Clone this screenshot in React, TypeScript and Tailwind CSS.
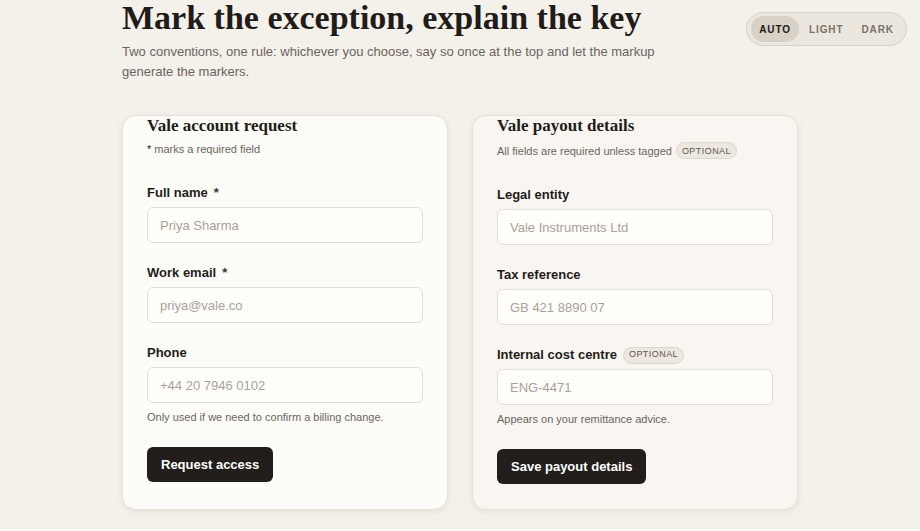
const serif = "font-['Liberation_Serif','DejaVu_Serif',serif]";
const sans = "font-['Liberation_Sans','Noto_Sans',sans-serif]";

function Optional() {
  return (
    <span className="inline-flex h-[17px] items-center rounded-full border border-[#ddd6ca] bg-[#ece7df] px-[5px] text-[9px] font-medium uppercase tracking-[0.05em] text-[#5f5952]">
      Optional
    </span>
  );
}

interface FieldProps {
  label: string;
  placeholder: string;
  required?: boolean;
  optional?: boolean;
  hint?: string;
  first?: boolean;
}

function Field({ label, placeholder, required, optional, hint, first }: FieldProps) {
  return (
    <div className={first ? "" : "mt-[22px]"}>
      <div className="flex h-4 items-center gap-[6px] text-[13px] font-semibold text-[#1f1c19]">
        <span>{label}</span>
        {required && <span className="text-[#3a3530]">*</span>}
        {optional && <Optional />}
      </div>
      <input
        placeholder={placeholder}
        className="mt-[6px] block h-9 w-full rounded-[6px] border border-[#e3ddd3] bg-[#fffefb] px-3 text-[13px] text-[#1f1c19] outline-none placeholder:text-[#a9a197]"
      />
      {hint && (
        <p className="mt-[6px] text-[11px] leading-4 text-[#6b655e]">{hint}</p>
      )}
    </div>
  );
}

function ThemeToggle() {
  const items = ["Auto", "Light", "Dark"];
  return (
    <div className="fixed right-[13px] top-[12px] flex h-[34px] items-center gap-[2px] rounded-full border border-[#d8d1c6] bg-[#ebe6de] px-[4px] py-[3px]">
      {items.map((it, i) => (
        <span
          key={it}
          className={`flex h-[26px] items-center rounded-full px-[8px] text-[10px] font-bold uppercase tracking-[0.09em] ${
            i === 0 ? "bg-[#d7d1c7] text-[#1f1c19]" : "text-[#7a7369]"
          }`}
        >
          {it}
        </span>
      ))}
    </div>
  );
}

export default function App() {
  return (
    <div className={`min-h-[531px] bg-[#f4f0ea] ${sans}`}>
      <ThemeToggle />
      <main className="mx-auto w-[676px]">
        <h1 className={`mt-[-2px] text-[34px] font-bold leading-[40px] text-[#1f1c19] ${serif}`}>
          Mark the exception, explain the key
        </h1>
        <p className="mt-1 w-[545px] text-[13px] leading-5 text-[#6b655e]">
          Two conventions, one rule: whichever you choose, say so once at the top and let the markup generate the markers.
        </p>

        <div className="mt-[33px] grid grid-cols-2 gap-6">
          <section className="flex flex-col rounded-[14px] border border-[#e8e1d6] bg-[#fdfcf8] px-6 pb-[27px] shadow-[0_2px_6px_rgba(60,45,30,0.07)]">
            <h2 className={`mt-[-1px] text-[17px] font-bold leading-[22px] text-[#1f1c19] ${serif}`}>
              Vale account request
            </h2>
            <p className="mt-[4px] text-[11px] leading-4 text-[#6b655e]">
              <span className="text-[#1f1c19]">*</span> marks a required field
            </p>
            <div className="mt-[28px]">
              <Field first label="Full name" placeholder="Priya Sharma" required />
              <Field label="Work email" placeholder="priya@vale.co" required />
              <Field
                label="Phone"
                placeholder="+44 20 7946 0102"
                hint="Only used if we need to confirm a billing change."
              />
            </div>
            <button className="mt-[22px] h-[35px] self-start rounded-[6px] bg-[#211e1b] px-[14px] text-[13px] font-semibold text-white">
              Request access
            </button>
          </section>

          <section className="flex flex-col rounded-[14px] border border-[#e8e1d6] bg-[#f9f6f1] px-6 pb-[24px] shadow-[0_2px_6px_rgba(60,45,30,0.07)]">
            <h2 className={`mt-[-1px] text-[17px] font-bold leading-[22px] text-[#1f1c19] ${serif}`}>
              Vale payout details
            </h2>
            <div className="mt-[5px] flex items-center gap-1 text-[11px] leading-4 text-[#6b655e]">
              <span>All fields are required unless tagged</span>
              <Optional />
            </div>
            <div className="mt-[28px]">
              <Field first label="Legal entity" placeholder="Vale Instruments Ltd" />
              <Field label="Tax reference" placeholder="GB 421 8890 07" />
              <Field
                label="Internal cost centre"
                placeholder="ENG-4471"
                optional
                hint="Appears on your remittance advice."
              />
            </div>
            <button className="mt-[22px] h-[35px] self-start rounded-[6px] bg-[#211e1b] px-[14px] text-[13px] font-semibold text-white">
              Save payout details
            </button>
          </section>
        </div>
      </main>
    </div>
  );
}
